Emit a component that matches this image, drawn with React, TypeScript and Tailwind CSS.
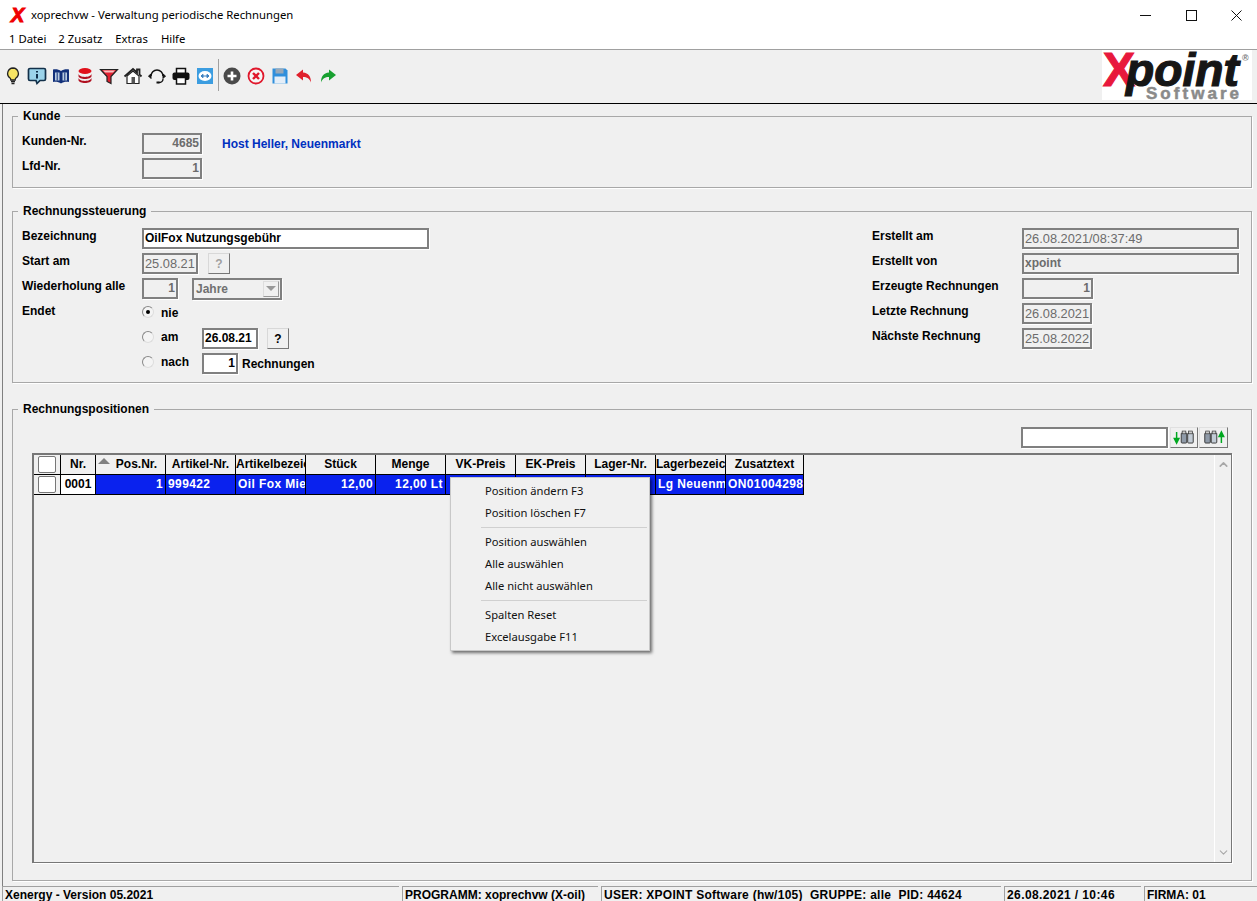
import React from "react";
import { ChevronDown, ChevronUp } from "lucide-react";

const columns = [
  { title: "Pos.Nr.", width: 70, value: "1", align: "text-right", sort: true },
  { title: "Artikel-Nr.", width: 70, value: "999422", align: "text-left" },
  { title: "Artikelbezeichnung", width: 70, value: "Oil Fox Miete", align: "text-left", tight: true },
  { title: "Stück", width: 70, value: "12,00", align: "text-right" },
  { title: "Menge", width: 70, value: "12,00 Lt", align: "text-right" },
  { title: "VK-Preis", width: 70, value: "", align: "text-right" },
  { title: "EK-Preis", width: 70, value: "", align: "text-right" },
  { title: "Lager-Nr.", width: 70, value: "", align: "text-right" },
  { title: "Lagerbezeichnung", width: 70, value: "Lg Neuenmarkt", align: "text-left", tight: true },
  { title: "Zusatztext", width: 78, value: "ON01004298", align: "text-left" },
];

function Field({ children, w, right, disabled, plain }: { children?: React.ReactNode; w: number; right?: boolean; disabled?: boolean; plain?: boolean }) {
  return (
    <div
      style={{ width: w }}
      className={`h-[21px] shrink-0 border-2 border-[#808080] shadow-[1px_1px_0_#fff] px-[1px] leading-[17px] whitespace-nowrap overflow-hidden ${right ? "text-right" : ""} ${plain ? "font-normal text-[12.800px]" : ""} ${disabled ? "bg-[#f0f0f0] text-[#6c6c6c]" : "bg-white text-black"}`}
    >
      {children}
    </div>
  );
}

function QButton({ disabled }: { disabled?: boolean }) {
  return (
    <div className={`w-[22px] h-[21px] flex items-center justify-center border border-[#d8d8d8] border-r-[#777] border-b-[#777] bg-[#f0f0f0] ${disabled ? "text-[#a0a0a0]" : "text-black"}`}>
      ?
    </div>
  );
}

function Radio({ checked }: { checked?: boolean }) {
  return (
    <div className="w-[12px] h-[12px] rounded-full border border-[#888] border-r-[#ddd] border-b-[#ddd] bg-[#f4f4f4] flex items-center justify-center shrink-0 -mt-[4px]">
      {checked && <div className="w-[4px] h-[4px] rounded-full bg-black" />}
    </div>
  );
}

function Label({ children }: { children: React.ReactNode }) {
  return <div className="w-[120px] shrink-0 -mt-[5px]">{children}</div>;
}

function Group({ title, className, children }: { title: string; className?: string; children: React.ReactNode }) {
  return (
    <fieldset className={`ml-[9px] w-[1240px] border border-[#a8a8a8] shadow-[1px_1px_0_#fff] ${className ?? ""}`}>
      <legend className="ml-[5px] px-[5px] leading-[16px]">{title}</legend>
      {children}
    </fieldset>
  );
}

function ToolIcon({ children }: { children: React.ReactNode }) {
  return (
    <svg viewBox="0 0 20 20" className="w-[20px] h-[20px] shrink-0">
      {children}
    </svg>
  );
}

function Binoculars({ up }: { up?: boolean }) {
  return (
    <svg viewBox="0 0 26 16" className="w-[24px] h-[15px]">
      {up ? (
        <path d="M21 14V6M18.500 7h5L21 2z" stroke="#00a820" strokeWidth="1.600" fill="#00a820" />
      ) : (
        <path d="M5 2v8M2.500 9h5L5 14z" stroke="#00a820" strokeWidth="1.600" fill="#00a820" />
      )}
      <g transform={up ? "translate(-7,0)" : undefined}>
        <rect x="10" y="3" width="6" height="11" rx="1" fill="#8f9aa8" stroke="#333" />
        <rect x="17" y="3" width="6" height="11" rx="1" fill="#c3ccd6" stroke="#333" />
        <rect x="11" y="1" width="4" height="3" fill="#ccc" stroke="#333" strokeWidth=".7" />
        <rect x="18" y="1" width="4" height="3" fill="#ccc" stroke="#333" strokeWidth=".7" />
      </g>
    </svg>
  );
}

function Toolbar() {
  return (
    <div className="h-[55px] shrink-0 border-t border-t-[#a0a0a0] border-b border-b-black bg-[#f0f0f0] flex pl-[3px] relative">
      <div className="flex items-center gap-[4px] h-[52px]">
        <ToolIcon>
          <path d="M10 2a5.500 5.500 0 0 0-3 10c.6.5.8 1.200.8 2h4.400c0-.8.2-1.500.8-2a5.500 5.500 0 0 0-3-10z" fill="#f7e463" stroke="#222" strokeWidth="1.300" />
          <path d="M8 15.500h4M8.500 17.500h3" stroke="#222" strokeWidth="1.300" />
        </ToolIcon>
        <ToolIcon>
          <path d="M3 2.500h14a1.500 1.500 0 0 1 1.500 1.500v9a1.500 1.500 0 0 1-1.500 1.500h-4l-3 3-1-3H3A1.500 1.500 0 0 1 1.500 13V4A1.500 1.500 0 0 1 3 2.500z" fill="#9bd3ea" stroke="#12304a" strokeWidth="1.700" />
          <path d="M10 5v1.500M10 8v4.500" stroke="#12304a" strokeWidth="2" />
        </ToolIcon>
        <ToolIcon>
          <path d="M10 5C8 3.500 5 3 2 3.500v12.500c3-.5 6 0 8 1.500 2-1.500 5-2 8-1.500V3.500C15 3 12 3.500 10 5z" fill="#12307a" />
          <path d="M4 6.500h4.500v8H4zM11.500 6.500H16v8h-4.500z" fill="#b8cbe0" />
          <path d="M6.200 6.500v8M13.800 6.500v8" stroke="#12307a" />
        </ToolIcon>
        <ToolIcon>
          <ellipse cx="10" cy="5" rx="6.500" ry="3" fill="#e0101a" />
          <path d="M3.500 7.500c0 4.500 13 4.500 13 0v2.500c0 4-13 4-13 0zM3.500 11.500c0 4.500 13 4.500 13 0V14c0 4-13 4-13 0z" fill="#b01020" />
        </ToolIcon>
        <ToolIcon>
          <path d="M1.500 3.500h17l-6.500 7v7l-4-2v-5z" fill="#e02030" stroke="#222" strokeWidth="1.200" />
          <path d="M4 4.500h12l-2 2H6z" fill="#f7c0c0" />
        </ToolIcon>
        <ToolIcon>
          <path d="M1.500 10.500 10 3l4 3.500V3.500h2.500v5l2 2" fill="none" stroke="#222" strokeWidth="1.800" />
          <path d="M4 10v7.500h12V10l-6-5z" fill="#fff" stroke="#222" strokeWidth="1.200" />
          <path d="M8.500 11h3.500v6.500H8.500z" fill="#555" />
        </ToolIcon>
        <ToolIcon>
          <path d="M4 10a6 6 0 0 1 12 0" fill="none" stroke="#111" strokeWidth="1.500" />
          <path d="M16 13c0 2.500-2 3.500-4.500 3.500" fill="none" stroke="#111" strokeWidth="1.300" />
          <path d="M1.500 10 4 8v4.500zM18.500 10 16 8v4.500z" fill="#111" stroke="#111" />
          <rect x="9.500" y="15.500" width="3" height="2" fill="#111" />
        </ToolIcon>
        <ToolIcon>
          <path d="M5.500 7V2.500h9V7" fill="#fff" stroke="#111" strokeWidth="1.500" />
          <rect x="1.500" y="6.500" width="17" height="7.500" rx="2" fill="#111" />
          <path d="M5.500 11.500h9v6.500h-9z" fill="#fff" stroke="#111" strokeWidth="1.500" />
        </ToolIcon>
        <ToolIcon>
          <rect x="2" y="2" width="16" height="16" fill="#3c9de0" />
          <ellipse cx="10" cy="10" rx="6.500" ry="5" fill="#fff" />
          <path d="M6 10h8M6 10l2-1.700v3.400zM14 10l-2-1.700v3.400z" stroke="#3c80c0" fill="#3c80c0" />
        </ToolIcon>
      </div>
      <div className="w-px h-[32px] bg-[#a0a0a0] mt-[9px] ml-[3px] mr-[3px]" />
      <div className="flex items-center gap-[4px] h-[52px]">
        <ToolIcon>
          <circle cx="10" cy="10" r="8.500" fill="#4a4a4a" />
          <path d="M10 5.500v9M5.500 10h9" stroke="#fff" strokeWidth="2.600" />
        </ToolIcon>
        <ToolIcon>
          <circle cx="10" cy="10" r="7.500" fill="#f6f6f6" stroke="#e0182c" strokeWidth="1.800" />
          <path d="M7 7l6 6M13 7l-6 6" stroke="#e0182c" strokeWidth="2.400" />
        </ToolIcon>
        <ToolIcon>
          <path d="M2.500 2.500h13l2 2v13h-15z" fill="#2f8fdc" />
          <rect x="5.500" y="2.500" width="8" height="5" fill="#98a8b8" />
          <rect x="4.500" y="10.500" width="11" height="7" fill="#e4eef8" />
        </ToolIcon>
        <ToolIcon>
          <path d="M9 3.500 2 9l7 5.500V11c4 0 6.500 1.500 8 5.500 0-6-2.500-9.500-8-10z" fill="#e0202c" />
        </ToolIcon>
        <ToolIcon>
          <path d="M11 3.500 18 9l-7 5.500V11c-4 0-6.500 1.500-8 5.500 0-6 2.500-9.500 8-10z" fill="#18a030" />
        </ToolIcon>
      </div>
      <div className="ml-auto mr-[5px] w-[150px] h-[50px] bg-white shrink-0">
        <svg viewBox="0 0 150 50" className="w-[150px] h-[50px]">
          <text x="1" y="36" fontFamily="Liberation Sans" fontWeight="700" fontSize="48" fill="#e8183c" stroke="#e8183c" strokeWidth="1.200">X</text>
          <text x="24" y="36" fontFamily="Liberation Sans" fontWeight="700" fontStyle="italic" fontSize="46" fill="#161616" stroke="#161616" strokeWidth="1.200" textLength="113" lengthAdjust="spacingAndGlyphs">point</text>
          <text x="44" y="49" fontFamily="Liberation Sans" fontWeight="700" fontSize="17" fill="#8a8a8a" stroke="#8a8a8a" strokeWidth=".5" textLength="93">Software</text>
          <text x="140" y="11" fontFamily="Liberation Sans" fontSize="9" fill="#777">®</text>
        </svg>
      </div>
    </div>
  );
}

function Table() {
  return (
    <div className="ml-[19px] mt-[5px] w-[1200px] h-[410px] border-2 border-[#777] border-r border-b flex shadow-[1px_1px_0_#fff]">
      <div className="flex-1">
        <div className="flex w-fit h-[20px] border-b border-black bg-[#f0f0f0] text-black">
          <div className="w-[27px] shrink-0 border-r border-black flex items-center justify-center">
            <div className="w-[18px] h-[17px] bg-white border border-[#777] rounded-[2px]" />
          </div>
          <div className="w-[35px] shrink-0 border-r border-black text-center leading-[19px]">Nr.</div>
          {columns.map((c) => (
            <div
              key={c.title}
              style={{ width: c.width }}
              className={`shrink-0 border-r border-black leading-[19px] whitespace-nowrap overflow-hidden relative ${c.tight ? "text-left" : "text-center"}`}
            >
              {c.sort && <div className="absolute left-[2px] top-[3px] w-0 h-0 border-x-[6px] border-x-transparent border-b-[6px] border-b-[#808080]" />}
              {c.sort ? <span className="pl-[12px]">{c.title}</span> : c.title}
            </div>
          ))}
        </div>
        <div className="flex w-fit h-[20px] border-b border-black">
          <div className="w-[27px] shrink-0 border-r border-black flex items-center justify-center">
            <div className="w-[18px] h-[17px] bg-white border border-[#777] rounded-[2px]" />
          </div>
          <div className="w-[35px] shrink-0 border-r border-black bg-white text-center leading-[19px]">0001</div>
          {columns.map((c) => (
            <div
              key={c.title}
              style={{ width: c.width }}
              className={`shrink-0 border-r border-black bg-[#0a22ee] text-white px-[2px] leading-[19px] tracking-[.4px] whitespace-nowrap overflow-hidden ${c.align}`}
            >
              {c.value}
            </div>
          ))}
        </div>
      </div>
      <div className="w-[17px] shrink-0 border-l border-white flex flex-col justify-between items-center py-[3px] text-[#a8a8a8]">
        <ChevronUp size={13} strokeWidth={3} />
        <ChevronDown size={13} strokeWidth={2} />
      </div>
    </div>
  );
}

function ContextMenu() {
  const item = "h-[22px] pl-[34px] leading-[22px]";
  return (
    <div className="absolute left-[450px] top-[477px] w-[200px] h-[174px] bg-[#f0f0f0] border border-[#c8c8c8] shadow-[2px_2px_3px_rgba(0,0,0,.55)] pt-[2px] font-['Noto_Sans',sans-serif] font-normal text-[11.200px] text-[#111]">
      <div className={item}>Position ändern F3</div>
      <div className={item}>Position löschen F7</div>
      <div className="h-px bg-[#d0d0d0] my-[3px] ml-[30px] mr-[2px]" />
      <div className={`${item} mt-[1px]`}>Position auswählen</div>
      <div className={item}>Alle auswählen</div>
      <div className={item}>Alle nicht auswählen</div>
      <div className="h-px bg-[#d0d0d0] my-[3px] ml-[30px] mr-[2px]" />
      <div className={`${item} mt-[1px]`}>Spalten Reset</div>
      <div className={item}>Excelausgabe F11</div>
    </div>
  );
}

const rightRows = [
  { label: "Erstellt am", value: "26.08.2021/08:37:49", w: 217, plain: true },
  { label: "Erstellt von", value: "xpoint", w: 217 },
  { label: "Erzeugte Rechnungen", value: "1", w: 71, right: true },
  { label: "Letzte Rechnung", value: "26.08.2021", w: 70, plain: true },
  { label: "Nächste Rechnung", value: "25.08.2022", w: 70, plain: true },
];

const statusCells = [
  { t: "Xenergy - Version 05.2021", w: 397, track: "" },
  { t: "PROGRAMM: xoprechvw (X-oil)", w: 196, track: "" },
  { t: "USER: XPOINT Software (hw/105)  GRUPPE: alle  PID: 44624", w: 400, track: "tracking-[.27px]" },
  { t: "26.08.2021 / 10:46", w: 137, track: "tracking-[.4px]" },
  { t: "FIRMA: 01", w: 113, track: "" },
];

export default function App() {
  return (
    <div className="w-[1257px] h-[901px] overflow-hidden relative bg-[#f0f0f0] flex flex-col font-['Liberation_Sans',sans-serif] font-bold text-[12px] text-black">
      <div className="h-[30px] shrink-0 bg-white flex items-center font-['Noto_Sans',sans-serif] font-normal text-[11.300px]">
        <span className="ml-[11px] w-[20px] text-[20px] leading-none font-['Liberation_Sans',sans-serif] font-bold italic text-[#f00000] [-webkit-text-stroke:1px_#f00000]">X</span>
        <span>xoprechvw - Verwaltung periodische Rechnungen</span>
        <div className="ml-auto flex items-center gap-[34.500px] pr-[15px]">
          <svg viewBox="0 0 11 11" className="w-[11px] h-[11px]"><path d="M0 5.500h11" stroke="#111" /></svg>
          <svg viewBox="0 0 11 11" className="w-[11px] h-[11px]"><rect x=".5" y=".5" width="10" height="10" fill="none" stroke="#111" /></svg>
          <svg viewBox="0 0 11 11" className="w-[11px] h-[11px]"><path d="M.5.5l10 10M10.500.5l-10 10" stroke="#111" /></svg>
        </div>
      </div>
      <div className="h-[19px] shrink-0 bg-white flex items-center pl-[9px] font-['Noto_Sans',sans-serif] font-normal text-[11.300px] gap-[12px]">
        <span>1 Datei</span>
        <span>2 Zusatz</span>
        <span className="ml-[1px]">Extras</span>
        <span className="ml-[1px]">Hilfe</span>
      </div>
      <Toolbar />
      <div className="ml-[2px] flex-1 border-l border-[#808080] pt-[4px]">
        <Group title="Kunde">
          <div className="pl-[9px] pt-[7px] pb-[6px]">
            <div className="flex h-[25px] items-center">
              <Label>Kunden-Nr.</Label>
              <Field w={60} right disabled>4685</Field>
              <span className="ml-[20px] text-[#0030c0]">Host Heller, Neuenmarkt</span>
            </div>
            <div className="flex h-[25px] items-center">
              <Label>Lfd-Nr.</Label>
              <Field w={60} right disabled>1</Field>
            </div>
          </div>
        </Group>
        <Group title="Rechnungssteuerung" className="mt-[15px]">
          <div className="pl-[9px] pt-[7px] pb-[6px] flex">
            <div className="w-[850px] shrink-0">
              <div className="flex h-[25px] items-center">
                <Label>Bezeichnung</Label>
                <Field w={287}>OilFox Nutzungsgebühr</Field>
              </div>
              <div className="flex h-[25px] items-center">
                <Label>Start am</Label>
                <Field w={56} disabled plain>25.08.21</Field>
                <div className="ml-[10px]"><QButton disabled /></div>
              </div>
              <div className="flex h-[25px] items-center">
                <Label>Wiederholung alle</Label>
                <Field w={36} right disabled>1</Field>
                <div className="ml-[14px] w-[90px] h-[22px] border-2 border-[#808080] shadow-[1px_1px_0_#fff] flex items-center justify-between pl-[2px] pr-[1px] text-[#707070]">
                  <span className="mt-[1px]">Jahre</span>
                  <div className="w-[16px] h-[16px] border border-[#ddd] border-r-[#999] border-b-[#999] flex items-center justify-center">
                    <div className="w-0 h-0 border-x-[5px] border-x-transparent border-t-[5px] border-t-[#999]" />
                  </div>
                </div>
              </div>
              <div className="flex h-[25px] items-center">
                <Label>Endet</Label>
                <Radio checked />
                <span className="ml-[7px] -mt-[2px]">nie</span>
              </div>
              <div className="flex h-[25px] items-center">
                <div className="w-[120px] shrink-0" />
                <Radio />
                <span className="ml-[7px] w-[41px] -mt-[4px]">am</span>
                <Field w={56}>26.08.21</Field>
                <div className="ml-[9px]"><QButton /></div>
              </div>
              <div className="flex h-[25px] items-center">
                <div className="w-[120px] shrink-0" />
                <Radio />
                <span className="ml-[7px] w-[41px] -mt-[4px]">nach</span>
                <Field w={36} right>1</Field>
                <span className="ml-[4px]">Rechnungen</span>
              </div>
            </div>
            <div>
              {rightRows.map((r) => (
                <div key={r.label} className="flex h-[25px] items-center">
                  <div className="w-[150px] shrink-0 -mt-[5px]">{r.label}</div>
                  <Field w={r.w} right={r.right} disabled plain={r.plain}>{r.value}</Field>
                </div>
              ))}
            </div>
          </div>
        </Group>
        <Group title="Rechnungspositionen" className="mt-[18px]">
          <div className="pt-[10px] pb-[17px]">
            <div className="flex justify-end gap-[1px] pr-[23px] h-[21px]">
              <Field w={147} />
              <div className="ml-[1px] w-[28px] h-[21px] flex items-center justify-center border border-[#e0e0e0] border-r-[#777] border-b-[#777]"><Binoculars /></div>
              <div className="w-[29px] h-[21px] flex items-center justify-center border border-[#e0e0e0] border-r-[#777] border-b-[#777]"><Binoculars up /></div>
            </div>
            <Table />
          </div>
        </Group>
        <div className="-ml-[1px] mt-[5px] flex gap-[3px] h-[15px] overflow-hidden">
          {statusCells.map((s) => (
            <div key={s.t} style={{ width: s.w }} className={`shrink-0 border-t border-l border-[#a0a0a0] pl-[2px] leading-[17px] whitespace-pre ${s.track}`}>
              {s.t}
            </div>
          ))}
        </div>
      </div>
      <ContextMenu />
    </div>
  );
}
